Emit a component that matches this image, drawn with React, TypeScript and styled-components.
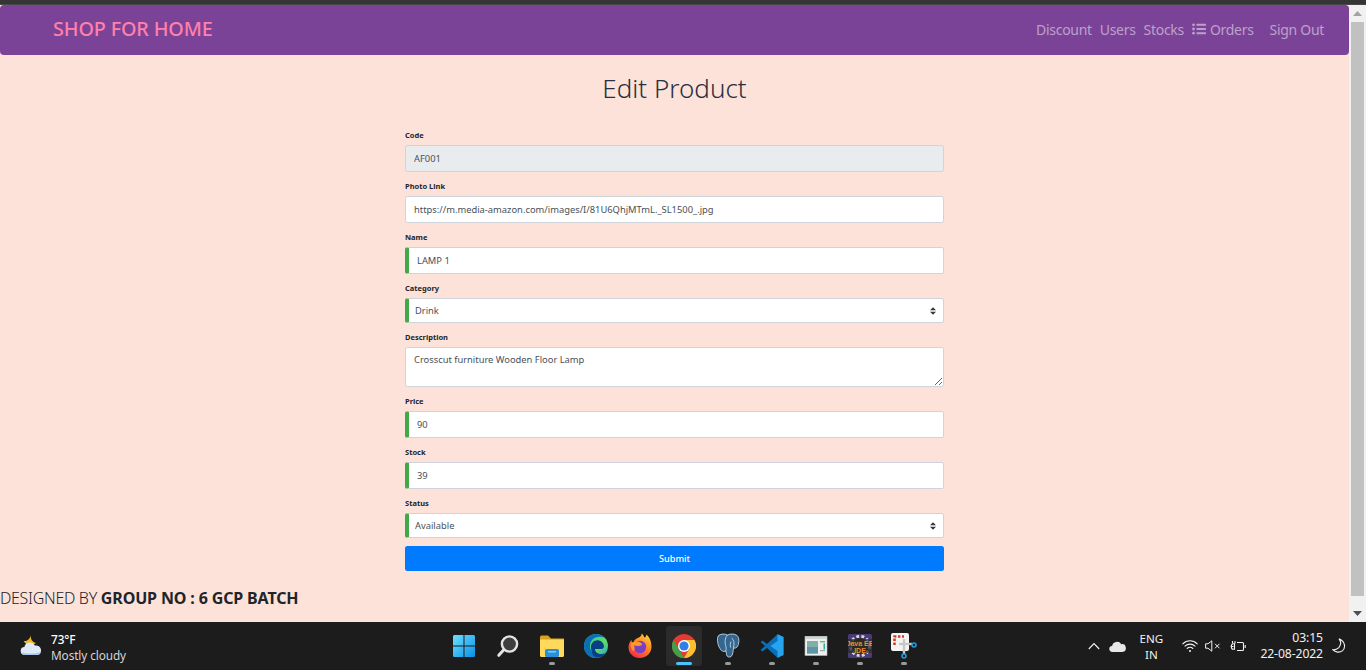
import React from "react";
import styled, { createGlobalStyle } from "styled-components";

const FONT = `"Noto Sans", "Open Sans", "Liberation Sans", sans-serif`;
const ARROWS = `url("data:image/svg+xml,%3csvg xmlns='http://www.w3.org/2000/svg' width='4' height='5' viewBox='0 0 4 5'%3e%3cpath fill='%23343a40' d='M2 0L0 2h4zm0 5L0 3h4z'/%3e%3c/svg%3e")`;

const Global = createGlobalStyle`
  html, body { margin: 0; padding: 0; height: 100%; overflow: hidden; }
  body { font-family: ${FONT}; background: #1c1c1c; }
  * { box-sizing: border-box; }
`;

const Screen = styled.div`
  width: 1366px; height: 670px; display: flex; flex-direction: column; overflow: hidden;
`;
const TopStrip = styled.div`height: 5px; background: linear-gradient(#353535 80%, #5b5b5b); flex: none;`;
const Viewport = styled.div`flex: 1; display: flex; min-height: 0;`;
const Page = styled.main`flex: 1; background: #fde2da; display: flex; flex-direction: column; min-width: 0;`;

const Navbar = styled.nav`
  height: 50px; flex: none; background: #7b4397; border-radius: 4px; display: flex; align-items: center;
  padding: 0 25px 0 53px; justify-content: space-between;
`;
const Brand = styled.a`color: #ff80ab; font-size: 19.8px; font-weight: 500; letter-spacing: -0.15px; padding-bottom: 3px;`;
const NavLinks = styled.div`display: flex; align-items: center; height: 100%; padding-bottom: 2px;`;
const NavLink = styled.a<{ $gap?: number }>`
  color: #bda1cb; font-size: 14px; letter-spacing: -0.3px; margin-left: ${(p) => p.$gap ?? 8}px;
  display: flex; align-items: center; gap: 4px;
`;

const Title = styled.h1`
  margin: 13px 0 0; height: 40px; line-height: 40px; text-align: center; font-size: 26px; font-weight: 300;
  color: #2b2f40;
`;
const Form = styled.form`width: 539px; margin: 13px auto 0; display: flex; flex-direction: column;`;
const Field = styled.div`display: flex; flex-direction: column;`;
const Label = styled.label`
  height: 24px; line-height: 12px; padding-top: 8px; font-size: 7.5px; font-weight: 700; color: #212529; display: block;
`;
const Input = styled.input<{ $valid?: boolean; $locked?: boolean }>`
  width: 100%; height: 27px; border: 1px solid #ced4da; border-radius: 2.5px;
  border-left: ${(p) => (p.$valid ? "4px solid #42a948" : "1px solid #ced4da")};
  padding: 0 0 0 8px; font: 400 9.35px ${FONT}; color: #495057;
  background: ${(p) => (p.$locked ? "#e9ecef" : "#fff")}; outline: none;
`;
const Select = styled.select`
  width: 100%; height: 25px; appearance: none; border: 1px solid #ced4da; border-left: 4px solid #42a948; border-radius: 2.5px;
  padding: 0 0 0 6px; font: 400 9.35px ${FONT}; color: #495057; outline: none;
  background: #fff ${ARROWS} no-repeat right 7px center / 6px 8px;
`;
const TextArea = styled.textarea`
  width: 100%; height: 40px; display: block; resize: vertical; border: 1px solid #ced4da; border-radius: 2.5px;
  padding: 5px 8px; font: 400 9.35px/13px ${FONT}; color: #495057; background: #fff; outline: none;
`;
const Submit = styled.button`
  margin-top: 8px; height: 25px; width: 100%; background: #007bff; color: #fff; border: 0; border-radius: 2.5px;
  font: 500 9.2px ${FONT}; padding: 0;
`;
const Footer = styled.footer`
  margin-top: 16px; font-size: 16px; font-weight: 300; color: #212529; line-height: 22px; letter-spacing: -0.3px;
`;
const FooterStrong = styled.b`font-weight: 700; letter-spacing: -0.14px;`;

const Scrollbar = styled.aside`
  width: 17px; flex: none; background: #f1f1f1; display: flex; flex-direction: column; align-items: center;
`;
const ScrollBtn = styled.div`height: 17px; flex: none; display: flex; align-items: center; justify-content: center;`;
const ScrollThumb = styled.div`width: 13px; height: 574px; flex: none; background: #c1c1c1;`;
const ScrollRest = styled.div`flex: 1;`;

const Taskbar = styled.footer`
  height: 48px; flex: none; background: #1c1c1c; display: grid; grid-template-columns: 442px auto 1fr; align-items: center;
  color: #f2f2f2;
`;
const Weather = styled.div`display: flex; align-items: center; gap: 9px; padding-left: 20px;`;
const WeatherText = styled.div`display: flex; flex-direction: column; font-size: 11.8px; line-height: 16px; padding-top: 1px;`;
const WeatherTemp = styled.span`color: #fff; font-weight: 500; letter-spacing: -0.1px;`;
const WeatherSub = styled.span`color: #d4d4d4; letter-spacing: -0.1px;`;
const Apps = styled.div`display: flex;`;
const AppCell = styled.div<{ $active?: boolean }>`
  width: 44px; height: 48px; display: flex; align-items: center; justify-content: center; position: relative;
  &::before {
    content: ""; position: absolute; left: 4px; right: 4px; top: 4px; bottom: 4px; border-radius: 4px;
    background: ${(p) => (p.$active ? "#2b2b2b" : "transparent")};
  }
  & > svg { position: relative; }
`;
const AppDot = styled.span<{ $active?: boolean }>`
  position: absolute; left: 50%; bottom: 5px; transform: translateX(-50%); height: 3px; border-radius: 2px;
  width: ${(p) => (p.$active ? 16 : 6)}px; background: ${(p) => (p.$active ? "#4cc2ff" : "#9a9a9a")};
`;
const Tray = styled.div`display: flex; align-items: center; justify-content: flex-end; height: 100%; color: #f2f2f2;`;
const TrayIcon = styled.span<{ $left: number }>`display: flex; margin-left: ${(p) => p.$left}px;`;
const LangBox = styled.div`
  display: flex; flex-direction: column; align-items: center; font-size: 11.6px; line-height: 16px; margin-left: 13px; width: 24px; padding-top: 1px;
`;
const Clock = styled.div`
  display: flex; flex-direction: column; align-items: flex-end; font-size: 12.2px; line-height: 16px; margin-left: 14px; letter-spacing: -0.1px;
`;

const WinIcon = () => (
  <svg width="24" height="24" viewBox="0 0 24 24">
    <defs><linearGradient id="w" x1="0" y1="0" x2="1" y2="1"><stop offset="0" stopColor="#6fe0ff" /><stop offset="1" stopColor="#0a8fe8" /></linearGradient></defs>
    <path fill="url(#w)" d="M1 2.5A1.5 1.5 0 0 1 2.5 1H11.5V11.5H1ZM12.5 1H21.5A1.5 1.5 0 0 1 23 2.5V11.5H12.5ZM1 12.5H11.5V23H2.5A1.5 1.5 0 0 1 1 21.5ZM12.5 12.5H23V21.5A1.5 1.5 0 0 1 21.5 23H12.5Z" />
  </svg>
);
const SearchIcon = () => (
  <svg width="24" height="24" viewBox="0 0 24 24" fill="none">
    <circle cx="13.5" cy="10" r="7.6" fill="#3d3d3d" stroke="#e4e4e4" strokeWidth="2.4" />
    <path d="M7.6 16 2.8 21.3" stroke="#e4e4e4" strokeWidth="3" strokeLinecap="round" />
  </svg>
);
const FolderIcon = () => (
  <svg width="26" height="24" viewBox="0 0 26 24">
    <path fill="#d9a21e" d="M1 3a1.5 1.5 0 0 1 1.5-1.500H9L12 4.500H25V10H1Z" />
    <path fill="#ffd95c" d="M1 5.500H25V21.500A1.500 1.500 0 0 1 23.500 23H2.500A1.500 1.500 0 0 1 1 21.500Z" />
    <rect x="6" y="15" width="14" height="8" rx="1.500" fill="#2a8fd8" />
    <rect x="9" y="17" width="8" height="1.500" fill="#7fcdf5" />
  </svg>
);
const EdgeIcon = () => (
  <svg width="24" height="24" viewBox="0 0 24 24">
    <defs><linearGradient id="e" x1="0" y1="0" x2="1" y2="1"><stop offset="0" stopColor="#2fc6a0" /><stop offset="0.6" stopColor="#5fdc6a" /><stop offset="1" stopColor="#1d9ad6" /></linearGradient></defs>
    <circle cx="12" cy="12" r="12" fill="url(#e)" />
    <path fill="#0c6db8" d="M0 12C0 5 5.500 0 12 0c3 0 6 1.200 8 3.500C14 1 6 4 6 12c0 5 3.500 10.500 9 11.600C6 25.500 0 19 0 12Z" />
    <path fill="#0b3f85" d="M7 13c0-4.500 4-7.500 8-6.500 3 .8 5 3 5 6 0 1.600-1.500 2.600-3.500 2.600H11c0 3 3 5 6 5 2 0 3.500-.5 5-1.600-2 3.300-5 5-8 5-4 0-7-4-7-10.500Z" />
  </svg>
);
const FirefoxIcon = () => (
  <svg width="24" height="26" viewBox="0 0 24 26">
    <defs><linearGradient id="f" x1="0.8" y1="0" x2="0.2" y2="1"><stop offset="0" stopColor="#ffd23a" /><stop offset="0.5" stopColor="#ff7a1f" /><stop offset="1" stopColor="#f0264f" /></linearGradient></defs>
    <path fill="url(#f)" d="M12 25C5 25 .5 20 .5 14.500 .5 11 2 8.500 3.500 7c0 1.500.5 2.500 1.500 3 1-3 3.500-5 6-5.500C13 3 14 2 13.500.5 16 2 15.500 4 17 4.500 18 3.500 18.500 2.500 18.500 1.500 22 4.500 23.500 9 23.500 13.500 23.500 20 18.500 25 12 25Z" />
    <circle cx="12" cy="14" r="6.200" fill="#7b3fc4" />
    <path fill="#ff9a2a" d="M3 10.500c3-2.500 7-2.500 9.500-1 1.500.9 2 2 1 2.800-2 .9-5 1-7.500 0 1 3 .5 5-.5 6C3 16 2.500 13 3 10.500Z" />
  </svg>
);
const ChromeIcon = () => (
  <svg width="24" height="24" viewBox="0 0 24 24">
    <circle cx="12" cy="12" r="12" fill="#e53935" />
    <path fill="#43a047" d="M12 24A12 12 0 0 1 1.600 6L7 15.500 12 24Z" />
    <path fill="#fbc02d" d="M22.400 6A12 12 0 0 1 12 24l5.500-9.500L12 6h10.400Z" />
    <circle cx="12" cy="12" r="6" fill="#fff" />
    <circle cx="12" cy="12" r="4.600" fill="#2f7fe8" />
  </svg>
);
const PgIcon = () => (
  <svg width="24" height="26" viewBox="0 0 24 26">
    <path fill="#336791" stroke="#c8d4dd" strokeWidth="0.9" d="M2.500 2.500C5.500.5 9 .8 11.500 2 14.500.6 18.500.6 21 2.500c2.500 2.200 2.200 7 .8 10.300-.9 2-2.800 2.700-4.300 2.200-.4 3.200-.6 6.800-2.300 8.400-1.800 1.400-4.200.6-4.700-1.700-.3-1.400-.2-3-.5-3.800-2.600 1.200-5 .2-6.200-2.800C2.300 13.500.2 6 2.500 2.500Z" />
    <path fill="none" stroke="#c8d4dd" strokeWidth="0.9" d="M11.500 2C8.500 5 8.700 10 10 14c.4 1.500 0 3-.4 4.400M15.500 5c2.500 1.500 3 5 2 10M15 8.500c-.8 2-1 3.800-.4 6" />
  </svg>
);
const VsIcon = () => (
  <svg width="24" height="24" viewBox="0 0 24 24">
    <path fill="#0a6fb8" d="M.7 8.200 2.500 6.500 7 9.900 17.500.3 23.500 3v18l-6 2.700L7 14.100l-4.500 3.400L.7 15.800 5 12Z" />
    <path fill="#28a4ee" d="M17.500.3 23.500 3v18l-6 2.700ZM17.500 7l-7 5 7 5Z" />
  </svg>
);
const WindowIcon = () => (
  <svg width="24" height="24" viewBox="0 0 24 24">
    <rect x="1" y="2.500" width="22" height="19" fill="#eef0f0" stroke="#b8bcbc" strokeWidth="0.6" />
    <rect x="1" y="2.500" width="22" height="2.500" fill="#cfd6d6" />
    <rect x="3" y="7" width="11" height="12.500" fill="#7fb0a8" />
    <rect x="3" y="13" width="11" height="6.500" fill="#5c94a8" />
    <rect x="16" y="7" width="5" height="1.500" fill="#69c06e" />
    <rect x="19.500" y="9.500" width="1.500" height="6" fill="#3aa" />
    <rect x="16" y="16" width="5" height="1.200" fill="#9aa" />
  </svg>
);
const JavaIcon = () => (
  <svg width="24" height="24" viewBox="0 0 24 24">
    <rect width="24" height="24" rx="1.500" fill="#4a3a78" />
    <circle cx="12" cy="12" r="9.500" fill="none" stroke="#d8d8d8" strokeWidth="3" strokeDasharray="2.800 2.300" />
    <circle cx="12" cy="12" r="8.200" fill="#2b2b2b" />
    <rect y="5" width="24" height="14" fill="#2b2b2b" opacity="0.75" />
    <text x="12" y="11.500" textAnchor="middle" fontSize="7" fontWeight="700" fill="#f08a24" fontFamily="Liberation Sans, sans-serif">Java EE</text>
    <text x="12" y="18.500" textAnchor="middle" fontSize="7" fontWeight="700" fill="#f08a24" fontFamily="Liberation Sans, sans-serif">IDE</text>
  </svg>
);
const SnipIcon = () => (
  <svg width="26" height="26" viewBox="0 0 26 26">
    <rect x="0" y="0" width="18" height="18" rx="2" fill="#f5f5f5" />
    <path fill="none" stroke="#d83b20" strokeWidth="2.600" strokeDasharray="2.400 1.600" d="M3.500 12V3.500H13" />
    <path d="M8 11 L21 11" stroke="#c8c8c8" strokeWidth="2.400" />
    <path d="M13 6 L13 21" stroke="#c8c8c8" strokeWidth="2.400" />
    <circle cx="23" cy="12" r="2" fill="none" stroke="#1f9ce0" strokeWidth="1.600" />
    <circle cx="13" cy="23" r="2" fill="none" stroke="#1f9ce0" strokeWidth="1.600" />
  </svg>
);
const WeatherIcon = () => (
  <svg width="22" height="22" viewBox="0 0 22 22">
    <path fill="#f5b81f" d="M11 0c-.7 4 1.200 7 5 8-3 2.500-8 2.500-10.500.2-.5-.4-1.500-1.500-1.700-2.200C7 6.500 10 4 11 0Z" />
    <path fill="#dfeaf7" d="M5 20a4 4 0 0 1-.6-8 5.500 5.500 0 0 1 10.400-1.400A4.800 4.800 0 0 1 17.500 20Z" />
    <path fill="#a9c6e8" d="M2 17c3 2 12 2 19 0-.5 2-2 3-3.500 3H5c-1.500 0-2.500-1.200-3-3Z" />
  </svg>
);
const ListIcon = () => (
  <svg width="14" height="12" viewBox="0 0 14 12" fill="#bda1cb">
    <circle cx="1.500" cy="1.800" r="1.400" /><circle cx="1.500" cy="6" r="1.400" /><circle cx="1.500" cy="10.200" r="1.400" />
    <rect x="4.500" y="0.800" width="9.500" height="2" rx="0.400" /><rect x="4.500" y="5" width="9.500" height="2" rx="0.400" /><rect x="4.500" y="9.200" width="9.500" height="2" rx="0.400" />
  </svg>
);
const Chevron = () => (
  <svg width="12" height="8" viewBox="0 0 12 8" fill="none" stroke="#f2f2f2" strokeWidth="1.100"><path d="M.8 7 6 1.500 11.200 7" /></svg>
);
const CloudTray = () => (
  <svg width="17" height="11" viewBox="0 0 17 11"><path fill="#e8e8e8" d="M3.500 11a3 3 0 0 1-.4-6A5 5 0 0 1 12.300 3.200 3.900 3.900 0 0 1 13.500 11Z" /></svg>
);
const Wifi = () => (
  <svg width="16" height="14" viewBox="0 0 16 14" fill="none" stroke="#f2f2f2" strokeWidth="1.100" strokeLinecap="round">
    <path d="M.8 4.800a10.200 10.200 0 0 1 14.400 0M3 7.200a7 7 0 0 1 10 0M5.200 9.500a3.900 3.900 0 0 1 5.600 0" /><circle cx="8" cy="12" r="1" fill="#f2f2f2" stroke="none" />
  </svg>
);
const Mute = () => (
  <svg width="16" height="12" viewBox="0 0 16 12" fill="none" stroke="#f2f2f2" strokeWidth="1">
    <path d="M.6 3.800H3L6.800.8v10.400L3 8.200H.6Z" /><path d="M10 3.800l4.500 4.500M14.500 3.800 10 8.300" />
  </svg>
);
const Battery = () => (
  <svg width="16" height="13" viewBox="0 0 16 13" fill="none" stroke="#f2f2f2" strokeWidth="1.100">
    <path d="M.6 6.500H3.500M4.500 3.700v5.600H3.400a2 2 0 0 1-2-2V5.700a2 2 0 0 1 2-2ZM7 2.500h5.500a1 1 0 0 1 1 1v6a1 1 0 0 1-1 1H7" /><path d="M15.200 5v3" />
    <path d="M2.500 1v2.500M5 1v2.500" />
  </svg>
);
const Moon = () => (
  <svg width="14" height="16" viewBox="0 0 14 16" fill="none" stroke="#f2f2f2" strokeWidth="1.100"><path d="M7 .8c2 2.500 2.200 6-.2 8.800-1.500 1.600-3.500 2.400-5.800 2.300 2.300 2.500 6.500 3 9.300 1C13.500 10.500 14 4 7 .8Z" /></svg>
);

const APPS: { node: React.ReactNode; dot: boolean; active?: boolean }[] = [
  { node: <WinIcon />, dot: false },
  { node: <SearchIcon />, dot: false },
  { node: <FolderIcon />, dot: true },
  { node: <EdgeIcon />, dot: false },
  { node: <FirefoxIcon />, dot: false },
  { node: <ChromeIcon />, dot: true, active: true },
  { node: <PgIcon />, dot: true },
  { node: <VsIcon />, dot: true },
  { node: <WindowIcon />, dot: true },
  { node: <JavaIcon />, dot: true },
  { node: <SnipIcon />, dot: true },
];

export default function App() {
  return (
    <Screen>
      <Global />
      <TopStrip />
      <Viewport>
        <Page>
          <Navbar>
            <Brand>SHOP FOR HOME</Brand>
            <NavLinks>
              <NavLink>Discount</NavLink>
              <NavLink>Users</NavLink>
              <NavLink>Stocks</NavLink>
              <NavLink><ListIcon />Orders</NavLink>
              <NavLink $gap={16}>Sign Out</NavLink>
            </NavLinks>
          </Navbar>
          <Title>Edit Product</Title>
          <Form onSubmit={(e) => e.preventDefault()}>
            <Field><Label>Code</Label><Input $locked readOnly value="AF001" /></Field>
            <Field><Label>Photo Link</Label><Input readOnly value="https://m.media-amazon.com/images/I/81U6QhjMTmL._SL1500_.jpg" /></Field>
            <Field><Label>Name</Label><Input $valid readOnly value="LAMP 1" /></Field>
            <Field><Label>Category</Label><Select defaultValue="Drink"><option>Drink</option></Select></Field>
            <Field><Label>Description</Label><TextArea readOnly value="Crosscut furniture Wooden Floor Lamp" /></Field>
            <Field><Label>Price</Label><Input $valid readOnly value="90" /></Field>
            <Field><Label>Stock</Label><Input $valid readOnly value="39" /></Field>
            <Field><Label>Status</Label><Select defaultValue="Available"><option>Available</option></Select></Field>
            <Submit type="submit">Submit</Submit>
          </Form>
          <Footer>DESIGNED BY <FooterStrong>GROUP NO : 6 GCP BATCH</FooterStrong></Footer>
        </Page>
        <Scrollbar>
          <ScrollBtn><svg width="9" height="5" viewBox="0 0 9 5"><path fill="#a3a3a3" d="M4.500 0 9 5H0Z" /></svg></ScrollBtn>
          <ScrollThumb />
          <ScrollRest />
          <ScrollBtn><svg width="9" height="5" viewBox="0 0 9 5"><path fill="#505050" d="M0 0h9L4.500 5Z" /></svg></ScrollBtn>
        </Scrollbar>
      </Viewport>
      <Taskbar>
        <Weather>
          <WeatherIcon />
          <WeatherText><WeatherTemp>73°F</WeatherTemp><WeatherSub>Mostly cloudy</WeatherSub></WeatherText>
        </Weather>
        <Apps>
          {APPS.map((a, i) => (
            <AppCell key={i} $active={a.active}>
              {a.node}
              {a.dot && <AppDot $active={a.active} />}
            </AppCell>
          ))}
        </Apps>
        <Tray>
          <TrayIcon $left={0}><Chevron /></TrayIcon>
          <TrayIcon $left={9}><CloudTray /></TrayIcon>
          <LangBox><span>ENG</span><span>IN</span></LangBox>
          <TrayIcon $left={19}><Wifi /></TrayIcon>
          <TrayIcon $left={7}><Mute /></TrayIcon>
          <TrayIcon $left={9}><Battery /></TrayIcon>
          <Clock><span>03:15</span><span>22-08-2022</span></Clock>
          <TrayIcon $left={9}><Moon /></TrayIcon>
          <TrayIcon $left={20} />
        </Tray>
      </Taskbar>
    </Screen>
  );
}
